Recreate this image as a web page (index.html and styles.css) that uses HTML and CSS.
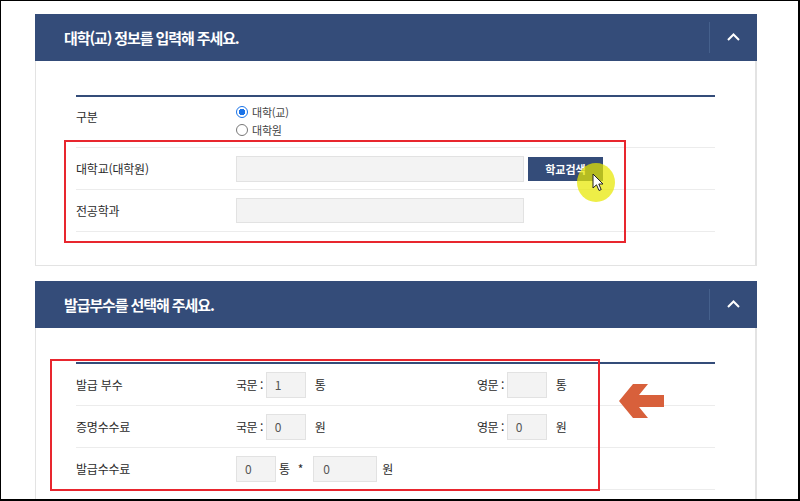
FILE: index.html
```html
<!DOCTYPE html>
<html lang="ko">
<head>
<meta charset="utf-8">
<title>대학(교) 정보 입력</title>
<link rel="stylesheet" href="styles.css">
</head>
<body>
<div class="frame">
  <section class="panel">
    <header class="panel-head">
      <h2 class="panel-title">대학(교) 정보를 입력해 주세요.</h2>
      <span class="toggle"><svg width="13" height="8" viewBox="0 0 13 8"><path d="M1 7 L6.5 1.5 L12 7" fill="none" stroke="#fff" stroke-width="2"/></svg></span>
    </header>
    <div class="panel-body">
      <div class="form">
        <div class="row row-radio">
          <div class="label label-top">구분</div>
          <div class="radios">
            <div class="radio"><span class="dot dot-on"></span>대학(교)</div>
            <div class="radio"><span class="dot"></span>대학원</div>
          </div>
        </div>
        <div class="row">
          <div class="label">대학교(대학원)</div>
          <div class="field"><span class="input input-wide"></span><span class="btn">학교검색</span></div>
        </div>
        <div class="row">
          <div class="label">전공학과</div>
          <div class="field"><span class="input input-wide input-short"></span></div>
        </div>
      </div>
    </div>
  </section>

  <section class="panel">
    <header class="panel-head">
      <h2 class="panel-title">발급부수를 선택해 주세요.</h2>
      <span class="toggle"><svg width="13" height="8" viewBox="0 0 13 8"><path d="M1 7 L6.5 1.5 L12 7" fill="none" stroke="#fff" stroke-width="2"/></svg></span>
    </header>
    <div class="panel-body">
      <div class="form">
        <div class="row row-grid">
          <div class="label">발급 부수</div>
          <div class="field"><span class="cap">국문 :</span><span class="input input-s">1</span><span class="unit">통</span></div>
          <div class="field"><span class="cap">영문 :</span><span class="input input-s"></span><span class="unit">통</span></div>
        </div>
        <div class="row row-grid">
          <div class="label">증명수수료</div>
          <div class="field"><span class="cap">국문 :</span><span class="input input-s">0</span><span class="unit">원</span></div>
          <div class="field"><span class="cap">영문 :</span><span class="input input-s">0</span><span class="unit">원</span></div>
        </div>
        <div class="row row-grid">
          <div class="label">발급수수료</div>
          <div class="field field-wide"><span class="input input-s">0</span><span class="unit unit-tight">통</span><span class="times">*</span><span class="input input-m">0</span><span class="unit unit-won">원</span></div>
        </div>
      </div>
    </div>
  </section>

  <div class="mark mark-1"></div>
  <div class="mark mark-2"></div>
  <svg class="pointer" width="46" height="34" viewBox="0 0 46 34"><polygon points="0,17 14,0 29,0 20,11 45,11 45,23 20,23 29,34 14,34" fill="#d8603b"/></svg>
  <div class="highlight"></div>
  <svg class="cursor" width="13" height="19" viewBox="0 0 13 19"><path d="M1 1 L1 15 L4.5 11.8 L7 17.5 L9.2 16.6 L6.8 11 L11 11 Z" fill="#fff" stroke="#222" stroke-width="1" stroke-linejoin="round"/></svg>
</div>
</body>
</html>
```
FILE: styles.css
```css
html, body {
  margin: 0;
  padding: 0;
  background: #fff;
}
.frame {
  position: relative;
  width: 800px;
  height: 501px;
  box-sizing: border-box;
  border: solid #000;
  border-width: 1px 2px 2px 1px;
  overflow: hidden;
  padding: 13px 0 0 34px;
  font-family: "Noto Sans CJK KR", "Noto Sans", sans-serif;
  color: #2b2b2b;
}
.panel {
  width: 722px;
  box-sizing: border-box;
  border: 1px solid #e3e3e3;
  border-top: 0;
  border-right-width: 2px;
  margin-bottom: 15px;
  background: #fff;
}
.panel-head {
  height: 47px;
  margin: 0 -2px 0 -1px;
  background: #344c79;
  display: flex;
  align-items: center;
  padding-left: 29px;
}
.panel-title {
  flex: 1;
  margin: 0;
  color: #fff;
  font-size: 15px;
  font-weight: 700;
  letter-spacing: -1.1px;
  line-height: 20px;
}
.toggle {
  width: 47px;
  height: 31px;
  border-left: 1px solid #45608c;
  display: flex;
  align-items: center;
  justify-content: center;
}
.toggle svg {
  display: block;
  margin-top: -2px;
}
.panel-body {
  padding: 34px 40px 33px 40px;
}
.form {
  border-top: 2px solid #344c79;
}
.row {
  display: grid;
  grid-template-columns: 160px 1fr;
  align-items: center;
  height: 41px;
  border-bottom: 1px solid #ececec;
  font-size: 12px;
  letter-spacing: -0.2px;
}
.row-radio {
  height: 50px;
  align-items: start;
}
.row-grid {
  grid-template-columns: 160px 241px 1fr;
}
.label {
  line-height: 16px;
}
.label-top {
  padding-top: 12px;
}
.radios {
  padding-top: 6px;
}
.radio {
  display: flex;
  align-items: center;
  height: 18px;
  font-size: 11px;
  color: #444;
}
.dot {
  width: 10px;
  height: 10px;
  border: 1px solid #777;
  border-radius: 50%;
  margin-right: 4px;
  box-sizing: content-box;
  background: #fff;
}
.dot-on {
  border-color: #1a73e8;
  background: radial-gradient(circle, #1a73e8 0 3px, #fff 3.5px);
}
.field {
  display: flex;
  align-items: center;
}
.field-wide {
  grid-column: 2 / 4;
}
.input {
  box-sizing: border-box;
  height: 26px;
  background: #f3f3f3;
  border: 1px solid #e2e2e2;
  display: flex;
  align-items: center;
  padding-left: 8px;
  color: #555;
  font-size: 12px;
}
.input-wide {
  width: 288px;
}
.input-short {
  height: 25px;
}
.input-s {
  width: 40px;
}
.input-m {
  width: 64px;
  padding-left: 9px;
}
.btn {
  margin-left: 4px;
  width: 75px;
  height: 24px;
  background: #344c79;
  color: #fff;
  font-size: 11px;
  font-weight: 700;
  letter-spacing: 0;
  display: flex;
  align-items: center;
  justify-content: center;
}
.cap {
  margin-right: 3px;
  letter-spacing: -0.5px;
}
.unit {
  margin-left: 9px;
}
.unit-tight {
  margin-left: 3px;
}
.unit-won {
  margin-left: 5px;
}
.times {
  margin: 0 10px 0 8px;
}
.mark {
  position: absolute;
  border: 2px solid #e8262e;
  box-sizing: border-box;
}
.mark-1 {
  left: 63px;
  top: 139px;
  width: 562px;
  height: 103px;
}
.mark-2 {
  left: 49px;
  top: 358px;
  width: 550px;
  height: 132px;
}
.pointer {
  position: absolute;
  left: 618px;
  top: 383px;
}
.highlight {
  position: absolute;
  left: 576px;
  top: 162px;
  width: 38px;
  height: 39px;
  border-radius: 50%;
  background: rgba(232, 232, 0, 0.72);
}
.cursor {
  position: absolute;
  left: 591px;
  top: 172px;
}
```
